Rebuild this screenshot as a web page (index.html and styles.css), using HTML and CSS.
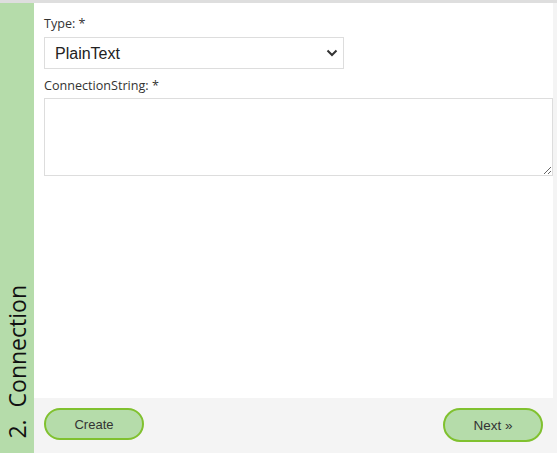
FILE: index.html
```html
<!DOCTYPE html>
<html>
<head>
<meta charset="utf-8">
<link rel="stylesheet" href="styles.css">
</head>
<body>
<div class="wizard">
  <div class="step">
    <div class="step-title">2.&nbsp; Connection</div>
  </div>
  <div class="main">
    <div class="content">
      <label class="label" for="type">Type: *</label>
      <select id="type" class="select">
        <option>PlainText</option>
      </select>
      <label class="label label-gap" for="cs">ConnectionString: *</label>
      <textarea id="cs" class="textarea"></textarea>
    </div>
    <div class="footer">
      <button class="btn">Create</button>
      <button class="btn btn-next">Next »</button>
    </div>
  </div>
</div>
</body>
</html>
```
FILE: styles.css
```css
html, body {
  margin: 0;
  padding: 0;
  background: #f4f4f4;
}
.wizard {
  display: flex;
  height: 453px;
  box-sizing: border-box;
  border-top: 3px solid #dedede;
}
.step {
  width: 34px;
  flex: none;
  background: #b5dcaa;
  display: flex;
  flex-direction: column;
  justify-content: flex-end;
  align-items: center;
  padding-bottom: 14px;
  box-sizing: border-box;
}
.step-title {
  writing-mode: vertical-rl;
  transform: rotate(180deg);
  font-family: "Open Sans", sans-serif;
  font-size: 23px;
  line-height: 30px;
  color: #111;
  white-space: nowrap;
}
.main {
  flex: 1;
  display: flex;
  flex-direction: column;
  background: #f4f4f4;
}
.content {
  flex: 1;
  background: #fff;
  margin-right: 4px;
  padding: 12px 0 0 10px;
  display: flex;
  flex-direction: column;
  align-items: flex-start;
}
.label {
  font-family: "Open Sans", sans-serif;
  font-size: 12.6px;
  line-height: 18px;
  color: #333;
}
.label-gap {
  margin-top: 8px;
}
.select {
  -webkit-appearance: none;
  appearance: none;
  margin-top: 4px;
  width: 300px;
  height: 32px;
  box-sizing: border-box;
  border: 1px solid #dddddd;
  border-radius: 0;
  background: #fff url("data:image/svg+xml;utf8,<svg xmlns='http://www.w3.org/2000/svg' width='12' height='8' viewBox='0 0 12 8'><path d='M1.5 1.5 L6 6 L10.5 1.5' fill='none' stroke='%23333' stroke-width='2'/></svg>") no-repeat right 5px center;
  padding: 0 10px;
  font-family: "Liberation Sans", Arial, sans-serif;
  font-size: 16px;
  color: #222;
  outline: none;
}
.textarea {
  margin-top: 3px;
  width: 509px;
  height: 78px;
  box-sizing: border-box;
  border: 1px solid #dddddd;
  border-radius: 0;
  padding: 4px;
  font-family: "Liberation Sans", Arial, sans-serif;
  font-size: 13px;
  outline: none;
}
.footer {
  height: 55px;
  flex: none;
  display: flex;
  justify-content: space-between;
  align-items: flex-start;
  padding: 10px 14px 0 10px;
  box-sizing: border-box;
}
.btn {
  width: 100px;
  height: 32px;
  box-sizing: border-box;
  border: 2px solid #80c12f;
  border-radius: 17px;
  background: #b5dcaa;
  font-family: "Liberation Sans", Arial, sans-serif;
  font-size: 13px;
  color: #333;
  padding: 0;
  cursor: pointer;
}
.btn-next {
  height: 34px;
  font-size: 13.5px;
}
```
